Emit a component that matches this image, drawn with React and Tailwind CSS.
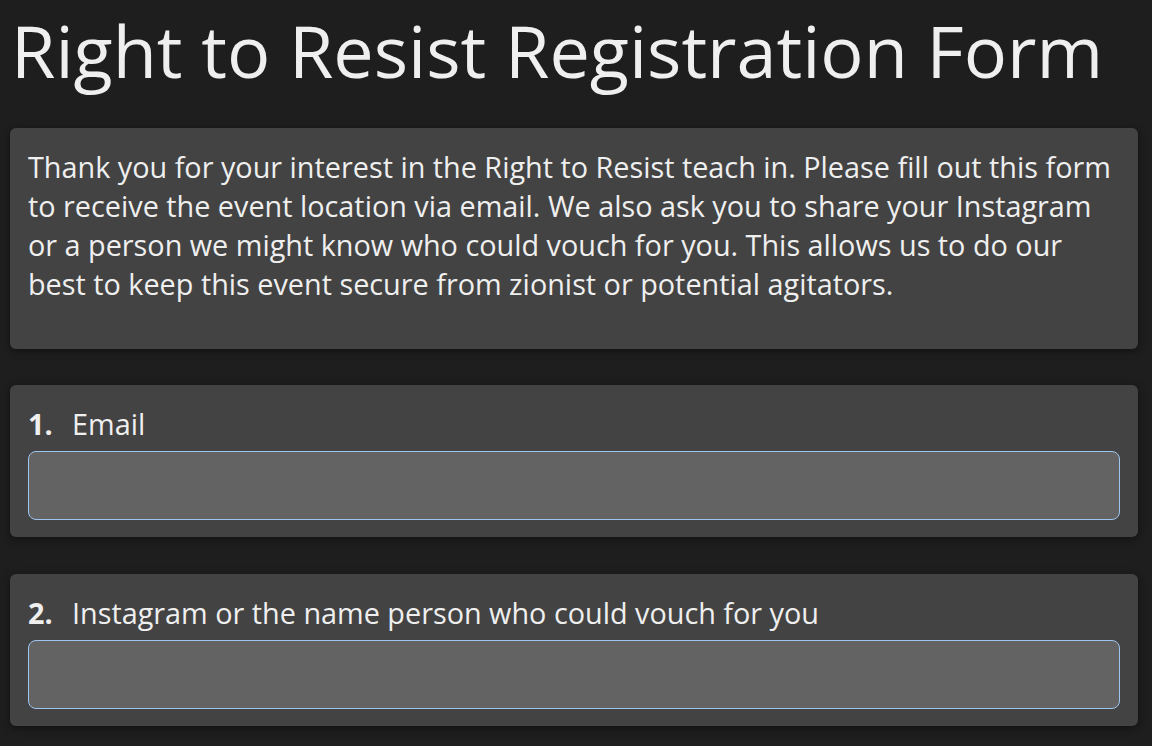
export default function App() {
  const questions = [
    { n: '1.', label: 'Email', gap: 'mt-[36px]' },
    { n: '2.', label: 'Instagram or the name person who could vouch for you', gap: 'mt-[37px]' },
  ];

  return (
    <div
      className="min-h-[746px] bg-[#1e1e1e] text-[#efefef] px-[10px] pb-10 overflow-hidden"
      style={{ fontFamily: '"Open Sans", "Liberation Sans", sans-serif' }}
    >
      <h1 className="text-[72px] leading-[100px] font-normal pl-[1px] whitespace-nowrap">
        Right to Resist Registration Form
      </h1>

      <div className="mt-[28px] w-[1128px] rounded-md bg-[#434343] shadow-[0_2px_8px_rgba(0,0,0,0.45)] pt-[19px] pb-[46px] px-[18px]">
        <p className="text-[28.8px] leading-[39px]">
          Thank you for your interest in the Right to Resist teach in. Please fill out this form to receive the event location via email. We also ask you to share your Instagram or a person we might know who could vouch for you. This allows us to do our best to keep this event secure from zionist or potential agitators.
        </p>
      </div>

      {questions.map((q) => (
        <div
          key={q.n}
          className={`${q.gap} w-[1128px] rounded-md bg-[#434343] shadow-[0_2px_8px_rgba(0,0,0,0.45)] pt-[19px] pb-[17px] px-[18px]`}
        >
          <label className="flex text-[28.8px] leading-[39px]">
            <span className="font-bold w-[44px]">{q.n}</span>
            <span>{q.label}</span>
          </label>
          <input
            type="text"
            className="mt-[8px] block w-[1092px] h-[69px] rounded-lg bg-[#636363] border border-[#9cc6f0] outline-none px-3 text-[22px]"
          />
        </div>
      ))}
    </div>
  );
}
